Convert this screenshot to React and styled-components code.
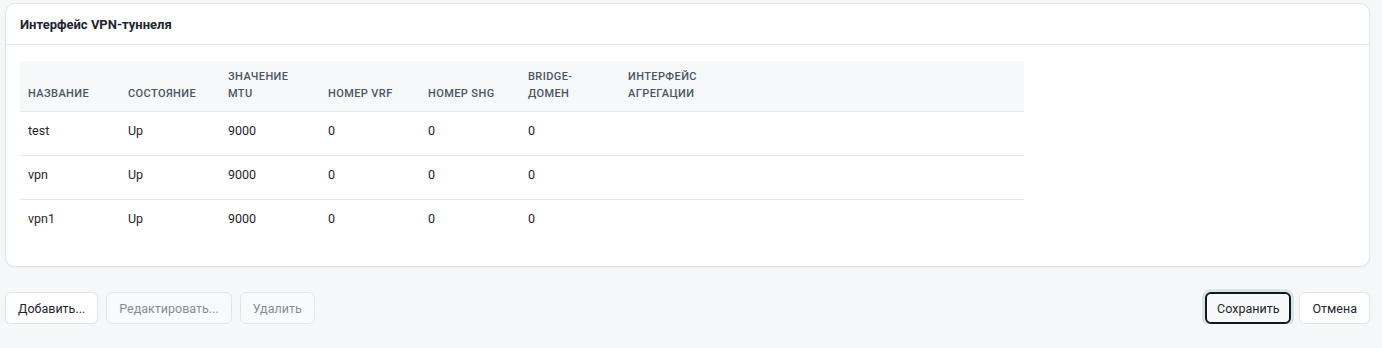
import styled, { createGlobalStyle } from "styled-components";

const GlobalStyle = createGlobalStyle`
  body {
    margin: 0;
    background: #f6f7f9;
    font-family: Roboto, "Noto Sans", sans-serif;
    color: #1f2530;
  }
`;

const columns = [
  ["Название"],
  ["Состояние"],
  ["Значение", "MTU"],
  ["Номер VRF"],
  ["Номер SHG"],
  ["Bridge-", "домен"],
  ["Интерфейс", "агрегации"],
];

const rows = [
  ["test", "Up", "9000", "0", "0", "0", ""],
  ["vpn", "Up", "9000", "0", "0", "0", ""],
  ["vpn1", "Up", "9000", "0", "0", "0", ""],
];

const App = () => {
  return (
    <Page>
      <GlobalStyle />
      <Card>
        <CardHeader>Интерфейс VPN-туннеля</CardHeader>
        <CardBody>
          <Table>
            <thead>
              <tr>
                {columns.map((lines, i) => (
                  <Th key={i}>
                    {lines.map((l, j) => (
                      <div key={j}>{l}</div>
                    ))}
                  </Th>
                ))}
                <Th $fill />
              </tr>
            </thead>
            <tbody>
              {rows.map((row, i) => (
                <Tr key={i}>
                  {row.map((cell, j) => (
                    <Td key={j}>{cell}</Td>
                  ))}
                  <Td />
                </Tr>
              ))}
            </tbody>
          </Table>
        </CardBody>
      </Card>
      <Footer>
        <Group>
          <Button>Добавить...</Button>
          <Button disabled>Редактировать...</Button>
          <Button disabled>Удалить</Button>
        </Group>
        <Group>
          <Button $focused>Сохранить</Button>
          <Button>Отмена</Button>
        </Group>
      </Footer>
    </Page>
  );
};
export default App;

const Page = styled.div`
  padding: 3px 12px 0 5px;
`;

const Card = styled.div`
  background: #fff;
  border: 1px solid #e3e5e9;
  border-radius: 10px;
  box-shadow: 0 1px 2px rgba(20, 30, 50, 0.05);
`;

const CardHeader = styled.div`
  height: 40px;
  padding: 0 14px;
  display: flex;
  align-items: center;
  font-size: 13px;
  font-weight: 700;
  color: #1f2530;
  border-bottom: 1px solid #e5e7eb;
`;

const CardBody = styled.div`
  padding: 16px 14px 23px;
`;

const Table = styled.table`
  width: 1004px;
  border-collapse: collapse;
  table-layout: fixed;
`;

const Th = styled.th`
  width: ${(p) => (p.$fill ? "auto" : "100px")};
  height: 50px;
  box-sizing: border-box;
  padding: 6px 8px 9px;
  vertical-align: bottom;
  text-align: left;
  background: #f7f8fa;
  border-bottom: 1px solid #e5e7eb;
  font-size: 11px;
  font-weight: 500;
  line-height: 17px;
  letter-spacing: 0.4px;
  text-transform: uppercase;
  color: #4d5561;
`;

const Tr = styled.tr`
  height: 44px;
  border-bottom: 1px solid #e5e7eb;
  &:last-child {
    border-bottom: none;
  }
`;

const Td = styled.td`
  padding: 0 8px 5px;
  font-size: 12.5px;
  color: #1f2530;
  vertical-align: middle;
`;

const Footer = styled.div`
  margin-top: 25px;
  display: flex;
  justify-content: space-between;
  align-items: center;
`;

const Group = styled.div`
  display: flex;
  gap: 8px;
  align-items: center;
`;

const Button = styled.button`
  height: 32px;
  box-sizing: border-box;
  padding: 0 12px;
  font-family: Roboto, "Noto Sans", sans-serif;
  font-size: 12.5px;
  border-radius: 6px;
  border: 1px solid #e3e5e9;
  background: #fff;
  color: #1f2530;
  box-shadow: 0 1px 2px rgba(20, 30, 50, 0.06);
  cursor: pointer;

  &:disabled {
    background: #f9fafb;
    color: #878d96;
    box-shadow: none;
    cursor: default;
  }

  ${(p) =>
    p.$focused &&
    `
    border: 2px solid #15171a;
    background: #f7f8fa;
    padding: 0 10px;
    box-shadow: 0 0 0 3px #d3e6e6;
  `}
`;
